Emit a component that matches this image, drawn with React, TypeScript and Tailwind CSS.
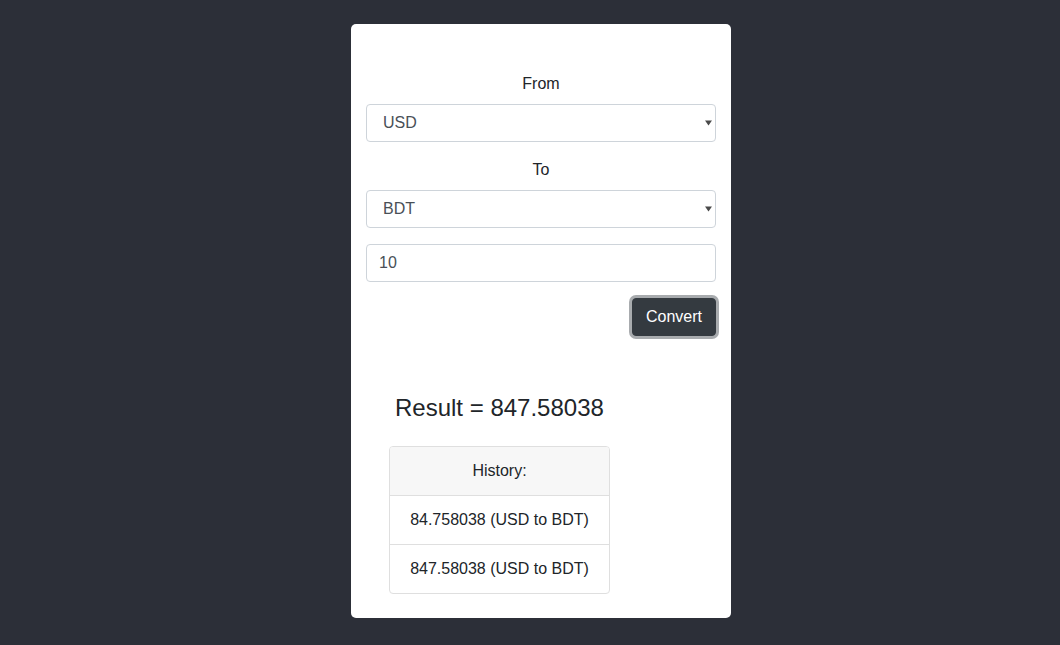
import { useState } from "react";

const history = ["84.758038 (USD to BDT)", "847.58038 (USD to BDT)"];

const Field = ({ label, children }: { label?: string; children: React.ReactNode }) => (
  <div className="mb-4 flex flex-col">
    {label && <label className="mb-2 text-center leading-6">{label}</label>}
    {children}
  </div>
);

const Select = ({
  value,
  onChange,
  options,
}: {
  value: string;
  onChange: (v: string) => void;
  options: string[];
}) => (
  <div className="relative">
    <select
      value={value}
      onChange={(e) => onChange(e.target.value)}
      className="h-[38px] w-full appearance-none rounded border border-[#ced4da] bg-white pr-6 pl-[16px] text-base text-[#495057] outline-none"
    >
      {options.map((o) => (
        <option key={o}>{o}</option>
      ))}
    </select>
    <svg
      className="pointer-events-none absolute top-[16px] right-[4px]"
      width="7"
      height="6"
      viewBox="0 0 7 6"
    >
      <path d="M0 0.5h7L3.5 5.5z" fill="#4a4a4a" />
    </svg>
  </div>
);

export default function App() {
  const [from, setFrom] = useState("USD");
  const [to, setTo] = useState("BDT");
  const [amount, setAmount] = useState("10");

  return (
    <div
      className="flex min-h-[645px] justify-center bg-[#2c2f38] pt-6 pl-[22px] text-[#212529]"
      style={{ fontFamily: '"Liberation Sans", Arial, sans-serif' }}
    >
      <div className="mb-[27px] w-[380px] self-start rounded-[5px] bg-white px-[15px] pt-[48px] pb-6">
        <Field label="From">
          <Select value={from} onChange={setFrom} options={["USD", "EUR", "BDT"]} />
        </Field>
        <Field label="To">
          <Select value={to} onChange={setTo} options={["BDT", "USD", "EUR"]} />
        </Field>
        <Field>
          <input
            value={amount}
            onChange={(e) => setAmount(e.target.value)}
            className="h-[38px] rounded border border-[#ced4da] px-3 text-base text-[#495057] outline-none"
          />
        </Field>
        <div className="flex justify-end">
          <button className="h-[38px] rounded border border-[#343a40] bg-[#343a40] px-[13px] text-base text-white shadow-[0_0_0_3px_rgba(82,88,93,0.5)]">
            Convert
          </button>
        </div>

        <div className="mt-[57px] pl-[23px]">
          <h2 className="ml-[6px] text-2xl leading-[29px]">Result = 847.58038</h2>
          <ul className="mt-[24px] w-[221px] overflow-hidden rounded border border-[#dfdfdf] text-center">
            <li className="bg-[#f7f7f7] py-3 leading-6">History:</li>
            {history.map((h) => (
              <li key={h} className="border-t border-[#dfdfdf] py-3 leading-6">
                {h}
              </li>
            ))}
          </ul>
        </div>
      </div>
    </div>
  );
}
